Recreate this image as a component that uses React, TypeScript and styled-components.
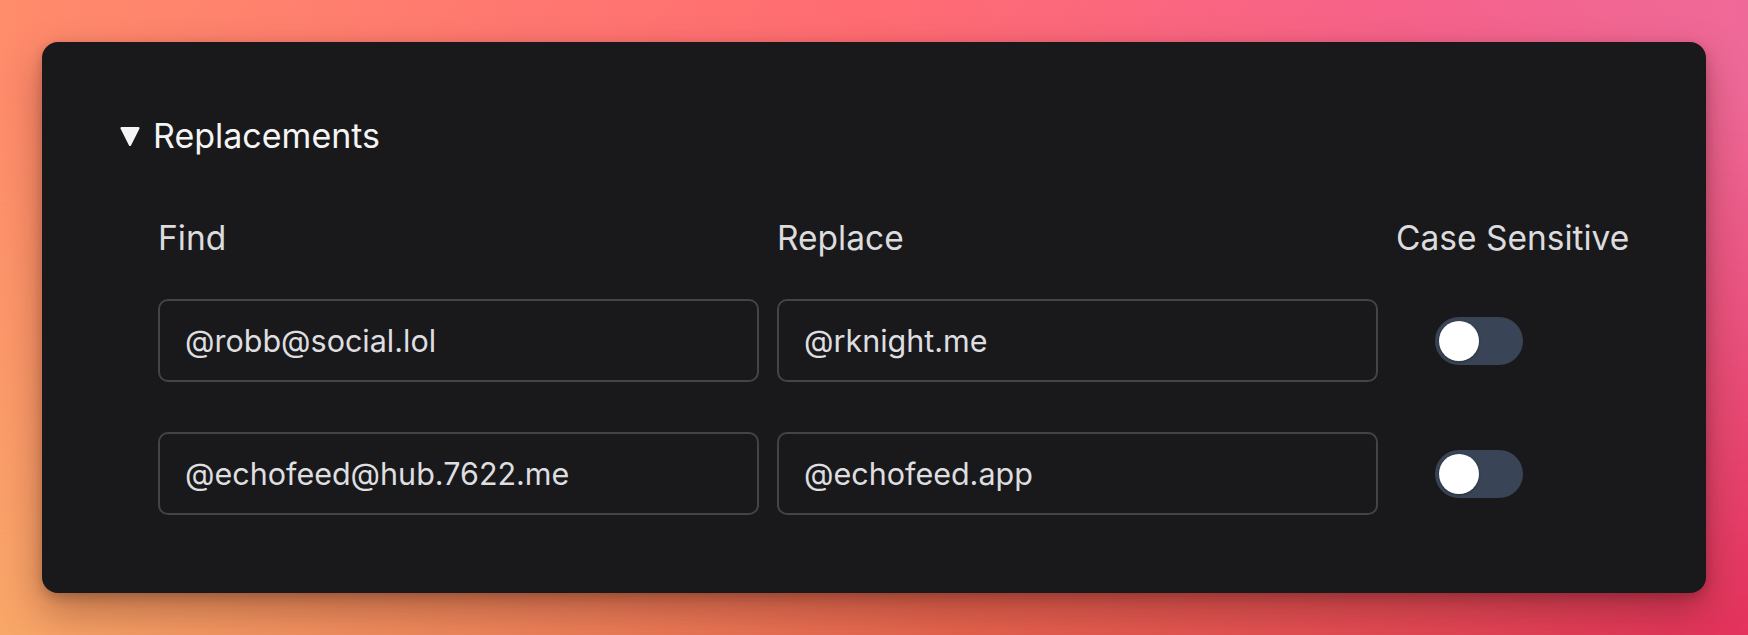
import React from 'react';
import styled, { createGlobalStyle } from 'styled-components';

const GlobalStyle = createGlobalStyle`
  html, body {
    margin: 0;
    padding: 0;
  }

  body {
    font-family: Inter, "Noto Sans", "Liberation Sans", sans-serif;
    -webkit-font-smoothing: antialiased;
  }
`;

const Backdrop = styled.main`
  position: relative;
  width: 1748px;
  height: 635px;
  box-sizing: border-box;
  padding: 42px;
  overflow: hidden;
  background: linear-gradient(
    90deg,
    #f9a769 0%,
    #f0855c 30%,
    #e8644f 55%,
    #e64a55 80%,
    #e4325c 100%
  );

  &::before {
    content: '';
    position: absolute;
    inset: 0;
    background: linear-gradient(
      90deg,
      #ff8c6b 0%,
      #ff7770 30%,
      #ff6c72 50%,
      #f6628a 80%,
      #ef6998 100%
    );
    -webkit-mask-image: linear-gradient(180deg, #000 0%, #000 15%, transparent 100%);
    mask-image: linear-gradient(180deg, #000 0%, #000 15%, transparent 100%);
  }
`;

const Card = styled.section`
  position: relative;
  z-index: 1;
  box-sizing: border-box;
  height: 551px;
  padding: 74px 78px 0;
  background: #19191b;
  border-radius: 16px;
  box-shadow: 0 18px 40px rgba(60, 20, 10, 0.35), 0 4px 12px rgba(0, 0, 0, 0.2);
`;

const Details = styled.details`
  margin: 0;
`;

const Summary = styled.summary`
  display: flex;
  align-items: center;
  gap: 13px;
  list-style: none;
  cursor: pointer;
  font-size: 34px;
  line-height: 40px;
  color: #f4f4f5;

  &::-webkit-details-marker {
    display: none;
  }
`;

const Caret = styled.svg`
  width: 20px;
  height: 21px;
  flex: none;
`;

const Table = styled.div`
  margin: 62px 0 0 38px;
  display: flex;
  flex-direction: column;
  gap: 50px;
`;

const Row = styled.div<{ header?: boolean }>`
  display: grid;
  grid-template-columns: 601px 601px 1fr;
  column-gap: 18px;
  align-items: center;
  margin-bottom: ${({ header }) => (header ? '-9px' : '0')};
`;

const Label = styled.div`
  font-size: 33.5px;
  line-height: 40px;
  color: #dcdcde;
  white-space: nowrap;
`;

const Field = styled.input`
  box-sizing: border-box;
  width: 100%;
  height: 83px;
  padding: 0 25px;
  background: #19191b;
  border: 2px solid #444446;
  border-radius: 10px;
  font-family: inherit;
  font-size: 30.5px;
  color: #dedee0;
  outline: none;
`;

const SwitchCell = styled.div`
  padding-left: 39px;
  display: flex;
  align-items: center;
`;

const Track = styled.button<{ on?: boolean }>`
  position: relative;
  width: 88px;
  height: 48px;
  padding: 0;
  border: none;
  border-radius: 24px;
  background: ${({ on }) => (on ? '#3b82f6' : '#394456')};
  cursor: pointer;
`;

const Knob = styled.span<{ on?: boolean }>`
  position: absolute;
  top: 4px;
  left: ${({ on }) => (on ? '44px' : '4px')};
  width: 40px;
  height: 40px;
  border-radius: 50%;
  background: #ffffff;
  box-shadow: 0 1px 3px rgba(0, 0, 0, 0.3);
`;

type Replacement = {
  find: string;
  replace: string;
  caseSensitive: boolean;
};

const replacements: Replacement[] = [
  { find: '@robb@social.lol', replace: '@rknight.me', caseSensitive: false },
  { find: '@echofeed@hub.7622.me', replace: '@echofeed.app', caseSensitive: false },
];

export default function App() {
  return (
    <>
      <GlobalStyle />
      <Backdrop>
        <Card>
          <Details open>
            <Summary>
              <Caret viewBox="0 0 20 21">
                <path
                  d="M1.6 1h16.8c1 0 1.5 1 1 1.8l-8.4 16.6c-.5.9-1.6.9-2 0L.6 2.8C.1 2 .6 1 1.6 1z"
                  fill="#f4f4f5"
                />
              </Caret>
              Replacements
            </Summary>
            <Table>
              <Row header>
                <Label>Find</Label>
                <Label>Replace</Label>
                <Label>Case Sensitive</Label>
              </Row>
              {replacements.map((item) => (
                <Row key={item.find}>
                  <Field defaultValue={item.find} />
                  <Field defaultValue={item.replace} />
                  <SwitchCell>
                    <Track type="button" on={item.caseSensitive} aria-pressed={item.caseSensitive}>
                      <Knob on={item.caseSensitive} />
                    </Track>
                  </SwitchCell>
                </Row>
              ))}
            </Table>
          </Details>
        </Card>
      </Backdrop>
    </>
  );
}
